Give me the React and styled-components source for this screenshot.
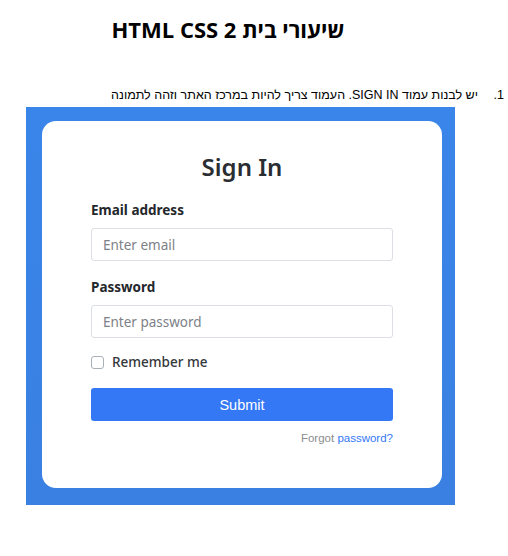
import React from "react";
import styled, { createGlobalStyle } from "styled-components";

const GlobalStyle = createGlobalStyle`
  body {
    margin: 0;
    background: #ffffff;
    font-family: "Noto Sans", sans-serif;
  }
`;

const Page = styled.div`
  width: 508px;
  height: 556px;
  padding-top: 14px;
  box-sizing: border-box;
`;

const DocTitle = styled.h1`
  margin: 0;
  width: 456px;
  text-align: center;
  direction: rtl;
  font-family: "Open Sans", sans-serif;
  font-weight: 700;
  font-size: 22px;
  line-height: 30px;
  color: #000;
`;

const TaskList = styled.ol`
  margin: 44px 0 0;
  padding: 0 18px 0 0;
  direction: rtl;
  font-family: "Liberation Sans", sans-serif;
  font-size: 12.5px;
  line-height: 14px;
  color: #000;

  li {
    padding-right: 12px;
  }
`;

const Screenshot = styled.div`
  margin: 5px 0 0 26px;
  width: 429px;
  height: 398px;
  padding: 14px 13px 0 16px;
  box-sizing: border-box;
  background: linear-gradient(180deg, #3a85e9 0%, #3a80e2 100%);
`;

const Card = styled.div`
  width: 400px;
  height: 367px;
  background: #ffffff;
  border-radius: 14px;
  padding: 28px 49px 0;
  box-sizing: border-box;
`;

const Heading = styled.h2`
  margin: 0 0 16px;
  text-align: center;
  font-family: "Noto Sans", sans-serif;
  font-weight: 600;
  font-size: 24px;
  line-height: 36px;
  color: #2a2d31;
`;

const Field = styled.div`
  display: flex;
  flex-direction: column;
  gap: 9px;
  margin-bottom: ${(p) => p.$space || 0}px;
`;

const Label = styled.label`
  font-family: "Noto Sans", sans-serif;
  font-weight: 700;
  font-size: 13.5px;
  line-height: 18px;
  color: #24272b;
`;

const Input = styled.input`
  width: 302px;
  height: 33px;
  box-sizing: border-box;
  border: 1px solid #dcdfe3;
  border-radius: 3px;
  padding: 0 11px;
  font-family: "Noto Sans", sans-serif;
  font-size: 13.5px;
  color: #333;
  outline: none;

  &::placeholder {
    color: #7d8187;
  }
`;

const CheckRow = styled.label`
  display: flex;
  align-items: center;
  gap: 8px;
  margin-top: 15px;
  font-family: "Noto Sans", sans-serif;
  font-weight: 500;
  font-size: 13.5px;
  line-height: 18px;
  color: #35383c;
`;

const Box = styled.span`
  width: 13px;
  height: 13px;
  border: 1px solid #aab0b7;
  border-radius: 3px;
  box-sizing: border-box;
`;

const SubmitButton = styled.button`
  display: block;
  margin-top: 17px;
  width: 302px;
  height: 33px;
  border: none;
  border-radius: 3px;
  background: #3478f6;
  color: #ffffff;
  font-family: "Liberation Sans", "Noto Sans", sans-serif;
  font-size: 14.5px;
`;

const Forgot = styled.p`
  margin: 10px 0 0;
  width: 302px;
  text-align: right;
  font-family: "Liberation Sans", sans-serif;
  font-size: 11.5px;
  line-height: 14px;
  color: #8a8d91;

  a {
    color: #3478f6;
    text-decoration: none;
  }
`;

export default function App() {
  return (
    <>
      <GlobalStyle />
      <Page>
        <DocTitle>שיעורי בית HTML CSS 2</DocTitle>
        <TaskList>
          <li>יש לבנות עמוד SIGN IN. העמוד צריך להיות במרכז האתר וזהה לתמונה</li>
        </TaskList>
        <Screenshot>
          <Card>
            <Heading>Sign In</Heading>
            <Field $space={17}>
              <Label>Email address</Label>
              <Input placeholder="Enter email" />
            </Field>
            <Field>
              <Label>Password</Label>
              <Input type="password" placeholder="Enter password" />
            </Field>
            <CheckRow>
              <Box />
              Remember me
            </CheckRow>
            <SubmitButton>Submit</SubmitButton>
            <Forgot>
              Forgot <a href="#">password?</a>
            </Forgot>
          </Card>
        </Screenshot>
      </Page>
    </>
  );
}
